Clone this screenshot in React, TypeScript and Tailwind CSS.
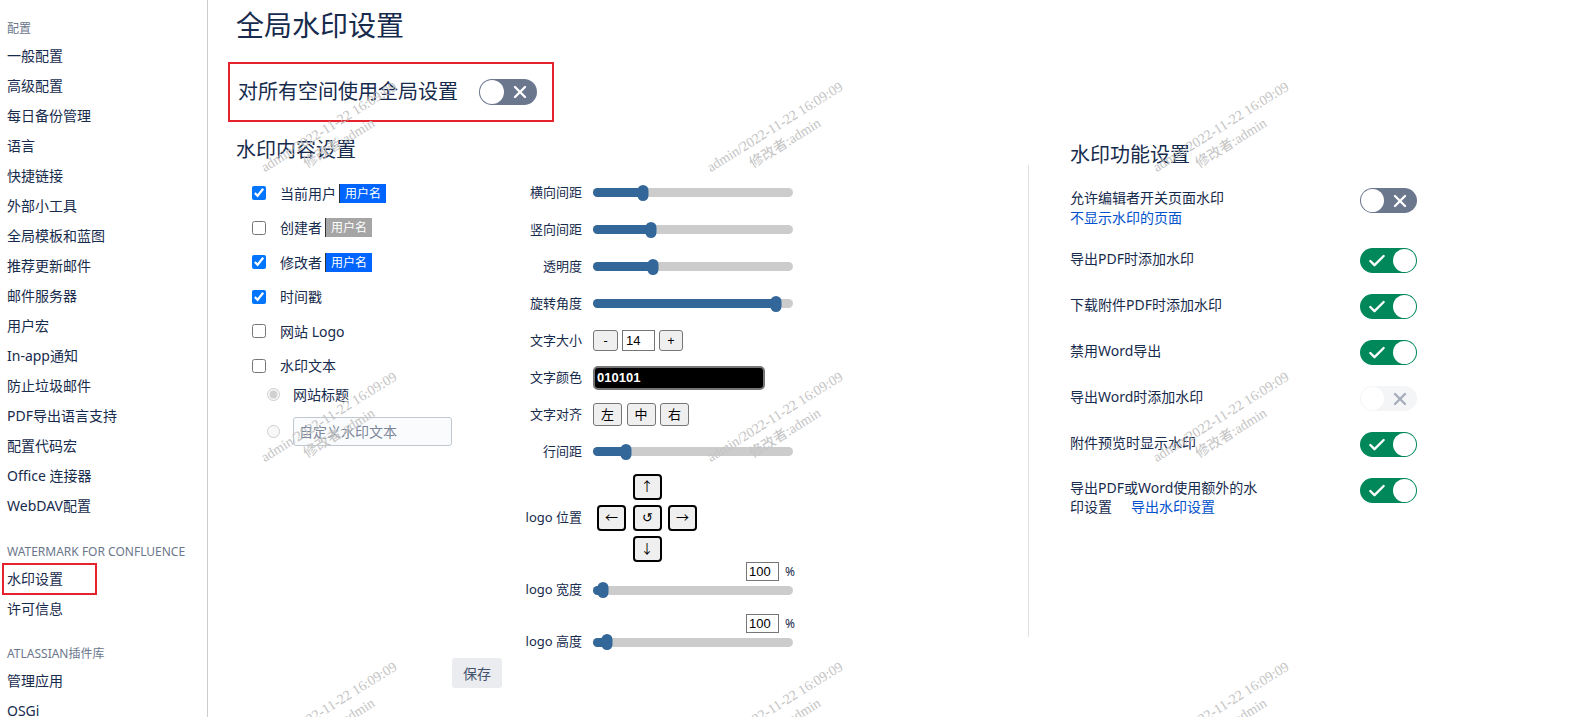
import React from 'react';
import { Check, X } from 'lucide-react';

const sideGroups = [
  {
    title: '配置',
    items: [
      '一般配置', '高级配置', '每日备份管理', '语言', '快捷链接', '外部小工具', '全局模板和蓝图',
      '推荐更新邮件', '邮件服务器', '用户宏', 'In-app通知', '防止垃圾邮件', 'PDF导出语言支持',
      '配置代码宏', 'Office 连接器', 'WebDAV配置',
    ],
  },
  { title: 'WATERMARK FOR CONFLUENCE', items: ['水印设置', '许可信息'] },
  { title: 'ATLASSIAN插件库', items: ['管理应用', 'OSGi'] },
];

const watermarks = [
  'left-[334px] top-[135px]', 'left-[780px] top-[135px]', 'left-[1226px] top-[135px]',
  'left-[334px] top-[425px]', 'left-[780px] top-[425px]', 'left-[1226px] top-[425px]',
  'left-[334px] top-[715px]', 'left-[780px] top-[715px]', 'left-[1226px] top-[715px]',
];

type ToggleState = 'on' | 'off' | 'disabled';

const Toggle: React.FC<{ state: ToggleState; large?: boolean }> = ({ state, large }) => {
  const box = large ? 'w-[58px] h-[26px]' : 'w-[57px] h-[25px]';
  const knob = large ? 'w-[24px] h-[24px]' : 'w-[23px] h-[23px]';
  if (state === 'on') {
    return (
      <div className={`${box} shrink-0 rounded-full bg-[#00875a] p-[1px] flex items-center justify-between`}>
        <div className="flex-1 flex justify-center">
          <Check size={20} strokeWidth={2.8} color="#fff" />
        </div>
        <div className={`${knob} rounded-full bg-white`} />
      </div>
    );
  }
  const bg = state === 'off' ? 'bg-[#6b778c]' : 'bg-[#f4f5f7]';
  const iconColor = state === 'off' ? '#ffffff' : '#a5adba';
  return (
    <div className={`${box} shrink-0 rounded-full ${bg} p-[1px] flex items-center`}>
      <div className={`${knob} rounded-full bg-white`} />
      <div className="flex-1 flex justify-center">
        <X size={20} strokeWidth={2.8} color={iconColor} />
      </div>
    </div>
  );
};

const Slider: React.FC<{ pct: number }> = ({ pct }) => (
  <div className="relative h-[9px] w-[200px] rounded-full bg-[#cccccc]">
    <div className="h-full rounded-full bg-[#336699]" style={{ width: `${pct}%` }} />
    <div
      className="absolute top-1/2 -translate-x-1/2 -translate-y-1/2 w-[11px] h-[16px] rounded-full bg-[#336699]"
      style={{ left: `${pct}%` }}
    />
  </div>
);

const Badge: React.FC<{ gray?: boolean }> = ({ gray }) => (
  <span
    className={`ml-[3px] inline-block h-[19px] px-[5px] text-[12px] leading-[19px] text-white border-l border-[#333] ${
      gray ? 'bg-[#a5a5a5]' : 'bg-[#0065ff]'
    }`}
  >
    用户名
  </span>
);

const Row: React.FC<{ label: string; children: React.ReactNode; className?: string }> = ({
  label,
  children,
  className = 'h-[37px]',
}) => (
  <div className={`flex items-center ${className}`}>
    <div className="w-[82px] text-right text-[13px] text-[#172b4d]">{label}</div>
    <div className="ml-[11px]">{children}</div>
  </div>
);

const btn = 'bg-[#efefef] border border-[#767676] rounded-[3px] text-[13px] text-black flex items-center justify-center';
const arrowBtn = 'w-[29px] h-[26px] bg-[#efefef] border-2 border-black rounded-[4px] text-[13px] text-black flex items-center justify-center';

const featureRows = [
  { label: '导出PDF时添加水印', state: 'on' as ToggleState },
  { label: '下载附件PDF时添加水印', state: 'on' as ToggleState },
  { label: '禁用Word导出', state: 'on' as ToggleState },
  { label: '导出Word时添加水印', state: 'disabled' as ToggleState },
  { label: '附件预览时显示水印', state: 'on' as ToggleState },
];

export default function App() {
  return (
    <div className="relative flex h-[717px] w-full overflow-hidden bg-white text-[#172b4d] font-['Noto_Sans','Noto_Sans_CJK_SC',sans-serif]">
      {/* sidebar */}
      <aside className="w-[208px] shrink-0 border-r border-[#cccccc] pl-[7px] pt-[17px]">
        {sideGroups.map((g, gi) => (
          <div key={g.title} className={gi === 0 ? '' : gi === 1 ? 'mt-[19px]' : 'mt-[18px]'}>
            <div className="h-[24px] leading-[24px] text-[12px] text-[#6b778c]">{g.title}</div>
            {g.items.map((it) =>
              it === '水印设置' ? (
                <div
                  key={it}
                  className="-ml-[5px] -my-[1px] w-[95px] h-[32px] border-2 border-[#e5232d] pl-[3px] text-[14px] leading-[28px]"
                >
                  {it}
                </div>
              ) : (
                <div key={it} className="h-[30px] leading-[30px] text-[14px] whitespace-nowrap">
                  {it}
                </div>
              )
            )}
          </div>
        ))}
      </aside>

      {/* main */}
      <main className="flex-1 pl-[28px] pt-[7px]">
        <h1 className="text-[28px] leading-[36px] font-normal">全局水印设置</h1>

        <div className="mt-[19px] -ml-[8px] w-[326px] h-[60px] border-2 border-[#e5232d] pl-[8px] flex items-center">
          <span className="text-[20px] leading-[28px]">对所有空间使用全局设置</span>
          <div className="ml-[21px]">
            <Toggle state="off" large />
          </div>
        </div>

        <div className="mt-[14px] flex">
          {/* content settings */}
          <div className="w-[792px] shrink-0">
            <h2 className="text-[20px] leading-[28px] font-normal">水印内容设置</h2>
            <div className="mt-[10px] ml-[12px] flex">
              <div className="w-[252px] pl-[4px] pt-[2px]">
                {[
                  { label: '当前用户', checked: true, badge: 'blue' },
                  { label: '创建者', checked: false, badge: 'gray' },
                  { label: '修改者', checked: true, badge: 'blue' },
                  { label: '时间戳', checked: true },
                  { label: '网站 Logo', checked: false },
                  { label: '水印文本', checked: false },
                ].map((c) => (
                  <label key={c.label} className="flex items-center h-[34.5px] text-[14px]">
                    <input type="checkbox" defaultChecked={c.checked} className="w-[14px] h-[14px]" />
                    <span className="ml-[14px]">{c.label}</span>
                    {c.badge && <Badge gray={c.badge === 'gray'} />}
                  </label>
                ))}
                <div className="ml-[15px] flex items-center h-[23px] text-[14px]">
                  <input type="radio" name="wm" disabled defaultChecked className="w-[13px] h-[13px]" />
                  <span className="ml-[13px]">网站标题</span>
                </div>
                <div className="ml-[15px] mt-[11px] flex items-center h-[29px]">
                  <input type="radio" name="wm" disabled className="w-[13px] h-[13px]" />
                  <input
                    disabled
                    placeholder="自定义水印文本"
                    className="ml-[13px] w-[159px] h-[29px] border border-[#c1c7d0] rounded-[3px] bg-[#fafbfc] pl-[5px] text-[14px] placeholder:text-[#7a869a]"
                  />
                </div>
              </div>

              <div>
                <Row label="横向间距"><Slider pct={25} /></Row>
                <Row label="竖向间距"><Slider pct={29} /></Row>
                <Row label="透明度"><Slider pct={30} /></Row>
                <Row label="旋转角度"><Slider pct={91.5} /></Row>
                <Row label="文字大小">
                  <div className="flex items-center gap-[4px]">
                    <button className={`${btn} w-[25px] h-[21px]`}>-</button>
                    <input
                      defaultValue="14"
                      className="w-[33px] h-[21px] border border-[#767676] pl-[3px] text-[13px] text-black font-['Liberation_Sans',sans-serif]"
                    />
                    <button className={`${btn} w-[24px] h-[21px]`}>+</button>
                  </div>
                </Row>
                <Row label="文字颜色">
                  <div className="w-[172px] h-[24px] bg-black border-2 border-[#767676] rounded-[5px] pl-[2px] text-[13px] leading-[20px] font-semibold text-white font-['Liberation_Sans',sans-serif]">
                    010101
                  </div>
                </Row>
                <Row label="文字对齐">
                  <div className="flex items-center gap-[4.5px]">
                    {['左', '中', '右'].map((t) => (
                      <button key={t} className={`${btn} w-[29px] h-[23px]`}>{t}</button>
                    ))}
                  </div>
                </Row>
                <Row label="行间距"><Slider pct={16.5} /></Row>
                <Row label="logo 位置" className="mt-[4px] h-[88px]">
                  <div className="ml-[4px] grid grid-cols-[29px_29px_29px] gap-x-[6.5px] gap-y-[5px]">
                    <div />
                    <button className={arrowBtn}>↑</button>
                    <div />
                    <button className={arrowBtn}>←</button>
                    <button className={arrowBtn}>↺</button>
                    <button className={arrowBtn}>→</button>
                    <div />
                    <button className={arrowBtn}>↓</button>
                    <div />
                  </div>
                </Row>
                {[5, 7].map((p, i) => (
                  <div key={p} className={i === 1 ? 'mt-[15px]' : ''}>
                    <div className="ml-[93px] w-[202px] h-[19px] flex items-center justify-end">
                      <input
                        defaultValue="100"
                        className="w-[33px] h-[19px] border border-[#767676] pl-[2px] text-[13px] text-black font-['Liberation_Sans',sans-serif]"
                      />
                      <span className="ml-[6px] text-[12px] text-[#172b4d]">%</span>
                    </div>
                    <Row label={i === 0 ? 'logo 宽度' : 'logo 高度'} className="h-[18px]">
                      <Slider pct={p} />
                    </Row>
                  </div>
                ))}
              </div>
            </div>
            <button className="mt-[7px] ml-[216px] w-[50px] h-[30px] rounded-[3px] bg-[#ebecf0] text-[14px] text-[#42526e]">
              保存
            </button>
          </div>

          {/* feature settings */}
          <div className="pt-[9px]">
            <h2 className="pl-[42px] text-[20px] leading-[20px] font-normal">水印功能设置</h2>
            <div className="h-[472px] border-l border-[#dfe1e6] pl-[41px] pt-[23px]">
              <div className="w-[347px] h-[60px] flex justify-between items-start">
                <div className="text-[14px] leading-[20px]">
                  <div>允许编辑者开关页面水印</div>
                  <div className="text-[#0052cc]">不显示水印的页面</div>
                </div>
                <Toggle state="off" />
              </div>
              {featureRows.map((r) => (
                <div key={r.label} className="w-[347px] h-[46px] flex justify-between items-start">
                  <div className="text-[14px] leading-[22px]">{r.label}</div>
                  <Toggle state={r.state} />
                </div>
              ))}
              <div className="w-[347px] flex justify-between items-start">
                <div className="text-[14px] leading-[19px]">
                  导出PDF或Word使用额外的水
                  <br />
                  印设置<span className="ml-[19px] text-[#0052cc]">导出水印设置</span>
                </div>
                <Toggle state="on" />
              </div>
            </div>
          </div>
        </div>
      </main>

      {/* watermark overlay */}
      {watermarks.map((pos) => (
        <div
          key={pos}
          className={`pointer-events-none absolute ${pos} -translate-x-1/2 -translate-y-1/2 -rotate-[32deg] whitespace-nowrap text-center text-[14px] leading-[19px] text-[#c4c4c4] font-['Liberation_Serif','Noto_Sans_CJK_SC',serif]`}
        >
          <div>admin/2022-11-22 16:09:09</div>
          <div>修改者:admin</div>
        </div>
      ))}
    </div>
  );
}
